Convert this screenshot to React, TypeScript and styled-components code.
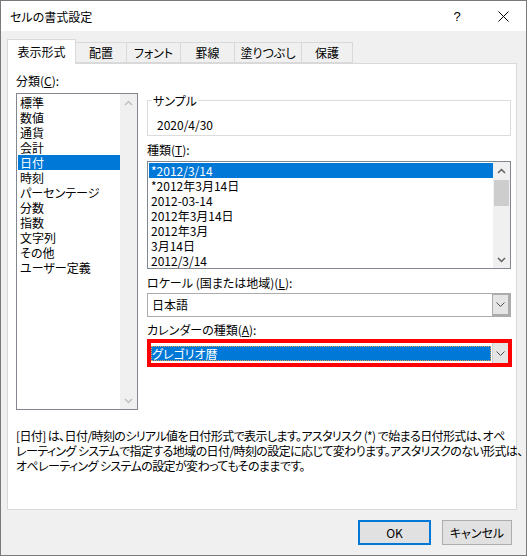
import React from 'react';
import styled, { createGlobalStyle } from 'styled-components';

const GlobalStyle = createGlobalStyle`
  html, body {
    margin: 0;
    padding: 0;
    background: #ffffff;
  }
  body {
    font-family: "Noto Sans CJK JP", "Noto Sans", sans-serif;
    font-size: 12px;
    font-feature-settings: "palt";
    color: #000000;
  }
  * {
    box-sizing: border-box;
  }
`;

const Window = styled.div`
  width: 527px;
  height: 556px;
  border: 1px solid #7a7a7a;
  display: flex;
  flex-direction: column;
  background: #f0f0f0;
`;

const TitleBar = styled.div`
  height: 30px;
  background: #ffffff;
  display: flex;
  align-items: center;
  padding-left: 9px;
  flex-shrink: 0;
`;

const Title = styled.div`
  flex: 1;
  line-height: 15px;
`;

const TitleButton = styled.div`
  width: 46px;
  height: 30px;
  display: flex;
  align-items: center;
  justify-content: center;
  font-family: "Liberation Sans", sans-serif;
  font-size: 13px;
`;

const TabRow = styled.div`
  display: flex;
  align-items: flex-end;
  height: 24px;
  margin-top: 8px;
  padding-left: 6px;
  position: relative;
  z-index: 1;
`;

const Tab = styled.div<{ $active?: boolean; $width: number }>`
  width: ${({ $width }) => $width}px;
  height: ${({ $active }) => ($active ? 25 : 21)}px;
  margin-bottom: ${({ $active }) => ($active ? -1 : 0)}px;
  margin-right: -1px;
  background: ${({ $active }) => ($active ? '#ffffff' : '#f0f0f0')};
  border: 1px solid #d9d9d9;
  border-bottom: ${({ $active }) => ($active ? 'none' : '1px solid #d9d9d9')};
  display: flex;
  justify-content: center;
  padding-top: ${({ $active }) => ($active ? 4 : 2)}px;
  line-height: 15px;
  position: relative;
  z-index: ${({ $active }) => ($active ? 2 : 1)};
`;

const Panel = styled.div`
  margin-left: 6px;
  width: 510px;
  height: 447px;
  background: #ffffff;
  border: 1px solid #d9d9d9;
  display: flex;
  flex-direction: column;
`;

const TopRow = styled.div`
  display: flex;
  gap: 9px;
  padding: 9px 5px 0 8px;
`;

const LeftCol = styled.div`
  width: 122px;
  display: flex;
  flex-direction: column;
`;

const RightCol = styled.div`
  width: 364px;
  display: flex;
  flex-direction: column;
  padding-top: 20px;
`;

const Label = styled.div<{ $gap?: number }>`
  line-height: 15px;
  margin-top: ${({ $gap }) => $gap ?? 0}px;
  white-space: nowrap;
  u {
    text-decoration: underline;
    text-underline-offset: 1px;
  }
`;

const ListBox = styled.div<{ $height: number; $gap: number }>`
  height: ${({ $height }) => $height}px;
  margin-top: ${({ $gap }) => $gap}px;
  border: 1px solid #828790;
  background: #ffffff;
  display: flex;
`;

const ListItems = styled.div`
  flex: 1;
  padding: 1px 0 0 1px;
  overflow: hidden;
`;

const ListItem = styled.div<{ $selected?: boolean }>`
  height: 15px;
  line-height: 15px;
  padding-left: 2px;
  white-space: nowrap;
  background: ${({ $selected }) => ($selected ? '#0078d7' : 'transparent')};
  color: ${({ $selected }) => ($selected ? '#ffffff' : '#000000')};
`;

const ScrollBar = styled.div`
  width: 17px;
  background: #f0f0f0;
  display: flex;
  flex-direction: column;
`;

const ScrollArrow = styled.div`
  height: 17px;
  display: flex;
  align-items: center;
  justify-content: center;
  flex-shrink: 0;
`;

const ScrollTrack = styled.div`
  flex: 1;
  padding: 1px 1px;
`;

const ScrollThumb = styled.div`
  height: 26px;
  background: #cdcdcd;
`;

const GroupBox = styled.fieldset`
  margin: 0;
  padding: 0 0 3px 9px;
  border: 1px solid #dcdcdc;
  min-width: 0;
`;

const GroupLegend = styled.legend`
  line-height: 15px;
  padding: 0 1px;
  margin-left: -5px;
`;

const SampleValue = styled.div`
  line-height: 15px;
  margin-top: 9px;
`;

const Combo = styled.div<{ $gap?: number }>`
  height: 24px;
  margin-top: ${({ $gap }) => $gap ?? 0}px;
  border: 1px solid #acacac;
  background: #ffffff;
  display: flex;
`;

const ComboText = styled.div`
  flex: 1;
  line-height: 22px;
  padding-left: 4px;
`;

const ComboButton = styled.div`
  width: 18px;
  background: #e5e5e5;
  border: 1px solid #acacac;
  border-right-width: 2px;
  border-bottom-width: 2px;
  display: flex;
  align-items: center;
  justify-content: center;
`;

const Highlight = styled.div`
  margin-top: 2px;
  width: 365px;
  height: 28px;
  border: 4px solid #ff0000;
  background: #ffffff;
  display: flex;
`;

const SelectedField = styled.div`
  flex: 1;
  margin: 3px 1px 2px 0;
  background: #0078d7;
  color: #ffffff;
  line-height: 15px;
  padding-left: 1px;
  outline: 1px dotted #e0a050;
  outline-offset: -1px;
`;

const HighlightButton = styled(ComboButton)`
  width: 16px;
  border: none;
  border-left: 1px solid #cfcfcf;
`;

const Description = styled.div`
  margin-top: 18px;
  padding-left: 8px;
  line-height: 15px;
  letter-spacing: -0.6px;
  white-space: nowrap;
`;

const Footer = styled.div`
  display: flex;
  justify-content: flex-end;
  gap: 11px;
  padding: 10px 14px 0 0;
`;

const Button = styled.div<{ $default?: boolean }>`
  width: ${({ $default }) => ($default ? 73 : 70)}px;
  height: 25px;
  background: #e1e1e1;
  border: ${({ $default }) => ($default ? '2px solid #0078d7' : '1px solid #adadad')};
  display: flex;
  align-items: center;
  justify-content: center;
  line-height: 15px;
`;

const Chevron: React.FC<{ up?: boolean; color: string }> = ({ up, color }) => (
  <svg width="9" height="6" viewBox="0 0 9 6">
    <polyline
      points={up ? '1,5 4.5,1.5 8,5' : '1,1 4.5,4.5 8,1'}
      fill="none"
      stroke={color}
      strokeWidth="1.5"
    />
  </svg>
);

const SmallChevron: React.FC = () => (
  <svg width="9" height="5" viewBox="0 0 9 5">
    <polyline points="0.5,0.5 4.5,4.5 8.5,0.5" fill="none" stroke="#505050" strokeWidth="1" />
  </svg>
);

const tabs = [
  { label: '表示形式', width: 69, active: true },
  { label: '配置', width: 52 },
  { label: 'フォント', width: 55 },
  { label: '罫線', width: 55 },
  { label: '塗りつぶし', width: 68 },
  { label: '保護', width: 52 },
];

const categories = ['標準', '数値', '通貨', '会計', '日付', '時刻', 'パーセンテージ', '分数', '指数', '文字列', 'その他', 'ユーザー定義'];

const formats = ['*2012/3/14', '*2012年3月14日', '2012-03-14', '2012年3月14日', '2012年3月', '3月14日', '2012/3/14'];

export default function App() {
  return (
    <>
      <GlobalStyle />
      <Window>
        <TitleBar>
          <Title>セルの書式設定</Title>
          <TitleButton>?</TitleButton>
          <TitleButton>
            <svg width="11" height="11" viewBox="0 0 11 11">
              <path d="M0.5 0.5 L10.5 10.5 M10.5 0.5 L0.5 10.5" stroke="#000" strokeWidth="1" />
            </svg>
          </TitleButton>
        </TitleBar>
        <TabRow>
          {tabs.map((t) => (
            <Tab key={t.label} $active={t.active} $width={t.width}>
              {t.label}
            </Tab>
          ))}
        </TabRow>
        <Panel>
          <TopRow>
            <LeftCol>
              <Label>
                分類(<u>C</u>):
              </Label>
              <ListBox $height={317} $gap={5}>
                <ListItems>
                  {categories.map((c) => (
                    <ListItem key={c} $selected={c === '日付'}>
                      {c}
                    </ListItem>
                  ))}
                </ListItems>
                <ScrollBar>
                  <ScrollArrow>
                    <Chevron up color="#c0c0c0" />
                  </ScrollArrow>
                  <ScrollTrack />
                  <ScrollArrow>
                    <Chevron color="#c0c0c0" />
                  </ScrollArrow>
                </ScrollBar>
              </ListBox>
            </LeftCol>
            <RightCol>
              <GroupBox>
                <GroupLegend>サンプル</GroupLegend>
                <SampleValue>2020/4/30</SampleValue>
              </GroupBox>
              <Label $gap={6}>
                種類(<u>T</u>):
              </Label>
              <ListBox $height={108} $gap={4}>
                <ListItems>
                  {formats.map((f, i) => (
                    <ListItem key={i} $selected={i === 0}>
                      {f}
                    </ListItem>
                  ))}
                </ListItems>
                <ScrollBar>
                  <ScrollArrow>
                    <Chevron up color="#606060" />
                  </ScrollArrow>
                  <ScrollTrack>
                    <ScrollThumb />
                  </ScrollTrack>
                  <ScrollArrow>
                    <Chevron color="#606060" />
                  </ScrollArrow>
                </ScrollBar>
              </ListBox>
              <Label $gap={6}>
                ロケール (国または地域)(<u>L</u>):
              </Label>
              <Combo $gap={3}>
                <ComboText>日本語</ComboText>
                <ComboButton>
                  <SmallChevron />
                </ComboButton>
              </Combo>
              <Label $gap={5}>
                カレンダーの種類(<u>A</u>):
              </Label>
              <Highlight>
                <SelectedField>グレゴリオ暦</SelectedField>
                <HighlightButton>
                  <SmallChevron />
                </HighlightButton>
              </Highlight>
            </RightCol>
          </TopRow>
          <Description>
            [日付] は、日付/時刻のシリアル値を日付形式で表示します。アスタリスク (*) で始まる日付形式は、オペ
            <br />
            レーティング システムで指定する地域の日付/時刻の設定に応じて変わります。アスタリスクのない形式は、
            <br />
            オペレーティング システムの設定が変わってもそのままです。
          </Description>
        </Panel>
        <Footer>
          <Button $default>OK</Button>
          <Button>キャンセル</Button>
        </Footer>
      </Window>
    </>
  );
}
